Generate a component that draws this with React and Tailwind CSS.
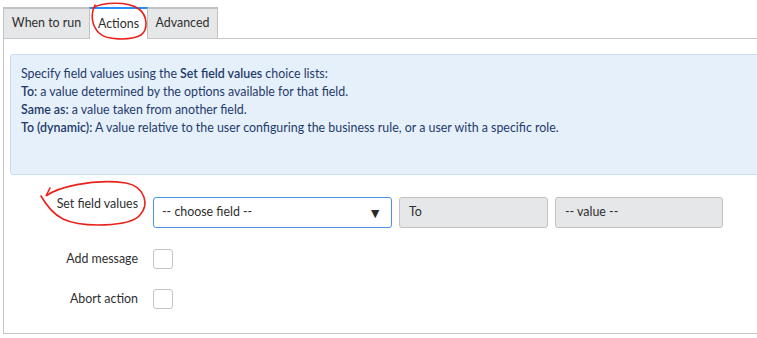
export default function App() {
  const font = { fontFamily: '"Source Sans Pro", Lato, "Noto Sans", sans-serif' };

  return (
    <div
      className="relative w-[757px] h-[338px] overflow-hidden bg-white text-[12.4px] text-[#2e2e2e]"
      style={font}
    >
      {/* Tabs */}
      <div className="flex items-end pl-[3px] pt-[6px] h-[38px] text-[12.4px]">
        <div className="h-[31px] w-[86px] flex items-center justify-center bg-[#e6e7e8] border-t-2 border-l border-[#c2c2c2]">
          When to run
        </div>
        <div className="h-[32px] w-[59px] flex items-center justify-center bg-white border-t-2 border-[#278efc] border-l border-l-[#c2c2c2] border-r border-r-[#c2c2c2] -mb-px relative z-10">
          Actions
        </div>
        <div className="h-[31px] w-[70px] flex items-center justify-center bg-[#e6e7e8] border-t-2 border-r border-[#c2c2c2]">
          Advanced
        </div>
      </div>

      {/* Panel */}
      <div className="ml-[3px] w-[800px] h-[296px] border-t border-l border-b border-[#c6c6c6] pt-[15px] pl-[6px]">
        <div className="w-[800px] h-[121px] bg-[#e6f0fa] border border-[#c9ddf2] rounded-[3px] pl-[10px] pt-[10px] leading-[18px] text-[#1e3a6b]">
          <p>
            Specify field values using the <b className="font-semibold">Set field values</b> choice lists:
          </p>
          <p>
            <b className="font-semibold">To:</b> a value determined by the options available for that field.
          </p>
          <p>
            <b className="font-semibold">Same as:</b> a value taken from another field.
          </p>
          <p>
            <b className="font-semibold">To (dynamic):</b> A value relative to the user configuring the business rule, or a user with a specific role.
          </p>
        </div>

        {/* Form */}
        <div className="mt-[22px] -ml-[6px] flex flex-col">
          <div className="flex items-start">
            <div className="w-[134px] text-right leading-[14px]">Set field values</div>
            <div className="ml-[15px] w-[239px] h-[31px] border border-[#4a94e6] rounded-[3px] flex items-center justify-between pl-[8px] pr-[9px] bg-white">
              <span>-- choose field --</span>
              <span className="text-[14px] text-[#2b2b2b]">▼</span>
            </div>
            <div className="ml-[7px] w-[149px] h-[31px] border border-[#c2c2c2] rounded-[3px] bg-[#e6e7e9] flex items-center pl-[9px]">
              To
            </div>
            <div className="ml-[7px] w-[168px] h-[31px] border border-[#c2c2c2] rounded-[3px] bg-[#e6e7e9] flex items-center pl-[9px]">
              -- value --
            </div>
          </div>

          <div className="flex items-center mt-[21px]">
            <div className="w-[134px] text-right">Add message</div>
            <div className="ml-[15px] w-[20px] h-[20px] border border-[#c4c4c4] rounded-[3px] bg-white" />
          </div>

          <div className="flex items-center mt-[20px]">
            <div className="w-[134px] text-right">Abort action</div>
            <div className="ml-[15px] w-[20px] h-[20px] border border-[#c4c4c4] rounded-[3px] bg-white" />
          </div>
        </div>
      </div>

      {/* Red hand-drawn annotations */}
      <svg className="absolute inset-0 z-20 pointer-events-none" width="757" height="338">
        <path
          d="M 93 8 C 102 2, 128 1, 139 9 C 148 16, 148 30, 141 35 C 130 41, 106 40, 99 33 C 92 26, 90 15, 95 5"
          fill="none"
          stroke="#e8231b"
          strokeWidth="1.6"
          strokeLinecap="round"
        />
        <path
          d="M 50 188 L 46 196 C 56 188, 92 178, 126 183 C 146 187, 149 205, 140 215 C 130 227, 82 228, 63 219 C 51 213, 45 203, 41 196"
          fill="none"
          stroke="#e8231b"
          strokeWidth="1.6"
          strokeLinecap="round"
        />
      </svg>
    </div>
  );
}
